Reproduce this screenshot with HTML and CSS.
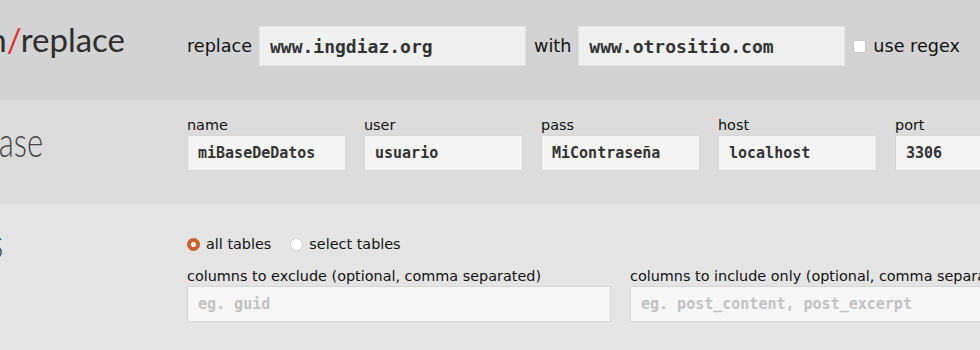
FILE: index.html
```html
<!DOCTYPE html>
<html>
<head>
<meta charset="utf-8">
<link rel="stylesheet" href="styles.css">
</head>
<body>
<section class="row row-search">
  <div class="head"><h1 class="title title-search">search<span class="slash">/</span>replace</h1></div>
  <div class="body search-line">
    <span class="lbl-big">replace</span>
    <input class="big-input" type="text" value="www.ingdiaz.org">
    <span class="lbl-big">with</span>
    <input class="big-input" type="text" value="www.otrositio.com">
    <span class="check"></span>
    <span class="lbl-big">use regex</span>
  </div>
</section>
<section class="row row-db">
  <div class="head"><h2 class="title title-sub title-db">database</h2></div>
  <div class="body db-grid">
    <div class="field"><div class="lbl">name</div><input class="db-input" type="text" value="miBaseDeDatos"></div>
    <div class="field"><div class="lbl">user</div><input class="db-input" type="text" value="usuario"></div>
    <div class="field"><div class="lbl">pass</div><input class="db-input" type="text" value="MiContraseña"></div>
    <div class="field"><div class="lbl">host</div><input class="db-input" type="text" value="localhost"></div>
    <div class="field"><div class="lbl">port</div><input class="db-input" type="text" value="3306"></div>
  </div>
</section>
<section class="row row-tables">
  <div class="head"><h2 class="title title-sub title-tables">tables</h2></div>
  <div class="body">
    <div class="radios">
      <span class="radio checked"></span><span class="radio-lbl">all tables</span>
      <span class="radio"></span><span class="radio-lbl">select tables</span>
    </div>
    <div class="cols-grid">
      <div class="field"><div class="lbl">columns to exclude (optional, comma separated)</div><input class="col-input" type="text" placeholder="eg. guid"></div>
      <div class="field"><div class="lbl">columns to include only (optional, comma separated)</div><input class="col-input" type="text" placeholder="eg. post_content, post_excerpt"></div>
    </div>
  </div>
</section>
</body>
</html>
```
FILE: styles.css
```css
* { box-sizing: border-box; }
html, body { margin: 0; padding: 0; }
body {
  width: 980px;
  overflow: hidden;
  font-family: "DejaVu Sans", sans-serif;
  color: #111;
  background: #e4e4e4;
}
.row {
  display: grid;
  grid-template-columns: 187px auto;
  white-space: nowrap;
}
.head { min-width: 0; }
.title {
  margin: 0;
  font-family: Lato, sans-serif;
  line-height: 1;
  color: #2e2e2e;
  white-space: nowrap;
}
.row-search { background: #d3d3d3; height: 100px; }
.row-db { background: #dcdcdc; height: 104px; }
.row-tables { background: #e4e4e4; height: 146px; }

.title-search { font-size: 33px; font-weight: 400; margin-left: -87px; margin-top: 23px; }
.slash { color: #e0302a; }
.title-sub {
  font-size: 42px;
  font-weight: 300;
  color: #444;
  margin-left: -76px;
  transform: scaleX(0.74);
  transform-origin: left center;
}
.title-db { margin-top: 20px; }
.title-tables { margin-top: 17px; }

.search-line {
  display: flex;
  align-items: center;
  padding-top: 26px;
  height: 66px;
}
.lbl-big { font-size: 17.6px; }
.big-input {
  width: 267px;
  height: 40px;
  margin: 0 8px 0 7px;
  padding: 0 10px;
  background: #f0f0f0;
  border: 1px solid #e2e2e2;
  font-family: "DejaVu Sans Mono", monospace;
  font-weight: bold;
  font-size: 18px;
  color: #333;
  outline: none;
}
.check {
  width: 13px;
  height: 13px;
  margin-right: 7px;
  background: #fff;
  border: 1px solid #c8c8c8;
  border-radius: 2px;
}

.db-grid {
  display: grid;
  grid-template-columns: repeat(5, 159px);
  column-gap: 18px;
  padding-top: 17px;
}
.lbl { font-size: 14.4px; line-height: 17px; margin-bottom: 1px; }
.db-input, .col-input {
  display: block;
  width: 100%;
  height: 36px;
  padding: 0 10px;
  border: 1px solid #d6d6d6;
  font-family: "DejaVu Sans Mono", monospace;
  font-weight: bold;
  font-size: 15px;
  color: #333;
  outline: none;
}
.db-input { background: #f4f4f4; }
.col-input { background: #f6f6f6; }
.col-input::placeholder { color: #c2c2c2; }

.radios {
  display: flex;
  align-items: center;
  height: 20px;
  margin-top: 30px;
  font-size: 14.4px;
}
.radio {
  width: 13px;
  height: 13px;
  border-radius: 50%;
  background: #fff;
  border: 1px solid #cfcfcf;
  margin-right: 6px;
}
.radio.checked {
  background: radial-gradient(circle, #fff 0 2.2px, #d2602f 2.8px);
  border-color: #c0552a;
}
.radio-lbl { margin-right: 19px; }
.cols-grid {
  display: grid;
  grid-template-columns: 424px 424px;
  column-gap: 19px;
  margin-top: 14px;
}
```
